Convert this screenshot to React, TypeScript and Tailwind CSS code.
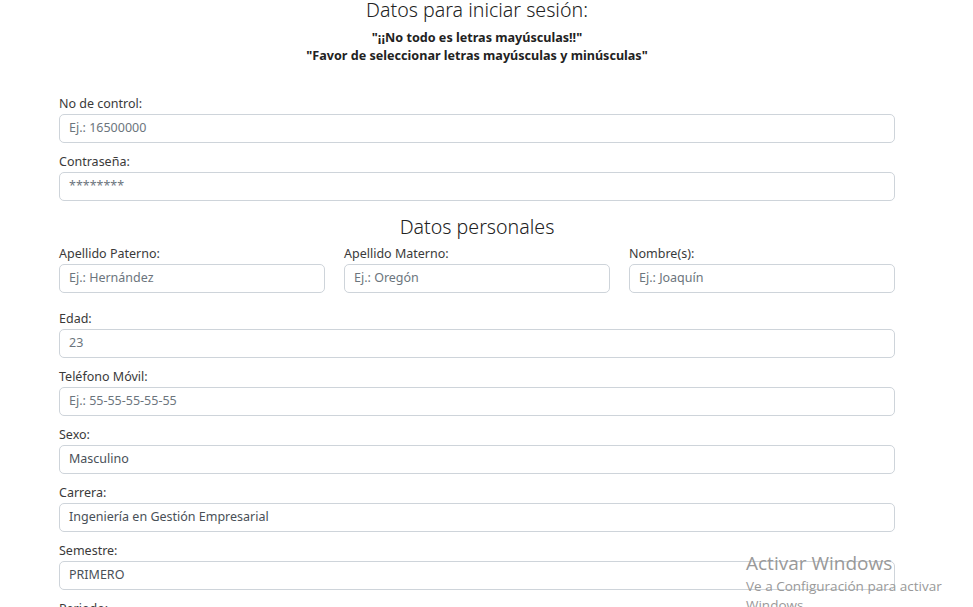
import React from 'react';

const font = { fontFamily: '"Noto Sans", "Open Sans", sans-serif' };

type FieldProps = {
  label: string;
  placeholder?: string;
  value?: string;
};

const Field: React.FC<FieldProps> = ({ label, placeholder, value }) => (
  <div className="mb-[10px]">
    <label className="block text-[12.5px] leading-[18px] text-[#3a3a3a] mb-[1px]">{label}</label>
    <div className="h-[29px] w-full rounded-[5px] border border-[#ced4da] bg-white px-[9px] flex items-center text-[12.5px]">
      {value ? (
        <span className="text-[#495057]">{value}</span>
      ) : (
        <span className="text-[#6c757d]">{placeholder}</span>
      )}
    </div>
  </div>
);

export default function App() {
  return (
    <div className="relative w-[973px] h-[607px] overflow-hidden bg-white" style={font}>
      <div className="w-[956px]">
        <div className="ml-[59px] w-[836px]">
          {/* Header */}
          <div className="text-center">
            <h1 className="text-[19.6px] leading-[20px] font-light text-[#222]">
              Datos para iniciar sesión:
            </h1>
            <p className="mt-[9px] text-[12.6px] leading-[18px] font-bold text-[#222]">
              "¡¡No todo es letras mayúsculas!!"
            </p>
            <p className="text-[12.6px] leading-[18px] font-bold text-[#222]">
              "Favor de seleccionar letras mayúsculas y minúsculas"
            </p>
          </div>

          <div className="mt-[30px]">
            <Field label="No de control:" placeholder="Ej.: 16500000" />
            <Field label="Contraseña:" placeholder="********" />
          </div>

          <h2 className="text-center text-[19.6px] leading-[24px] font-light text-[#222] mt-[14px]">
            Datos personales
          </h2>

          <div className="grid grid-cols-3 gap-x-[19px] mt-[6px] mb-[7px]">
            <Field label="Apellido Paterno:" placeholder="Ej.: Hernández" />
            <Field label="Apellido Materno:" placeholder="Ej.: Oregón" />
            <Field label="Nombre(s):" placeholder="Ej.: Joaquín" />
          </div>

          <Field label="Edad:" placeholder="23" />
          <Field label="Teléfono Móvil:" placeholder="Ej.: 55-55-55-55-55" />
          <Field label="Sexo:" value="Masculino" />
          <Field label="Carrera:" value="Ingeniería en Gestión Empresarial" />
          <Field label="Semestre:" value="PRIMERO" />
          <Field label="Periodo:" placeholder="" />
        </div>
      </div>

      {/* Windows activation watermark */}
      <div
        className="absolute left-[746px] top-[551px] text-[#999] pointer-events-none"
        style={{ fontFamily: '"Open Sans", "Noto Sans", sans-serif' }}
      >
        <div className="text-[19px] leading-[24px]">Activar Windows</div>
        <div className="mt-[1px] text-[13.5px] leading-[20px]">Ve a Configuración para activar</div>
        <div className="text-[13.5px] leading-[18px]">Windows</div>
      </div>
    </div>
  );
}
